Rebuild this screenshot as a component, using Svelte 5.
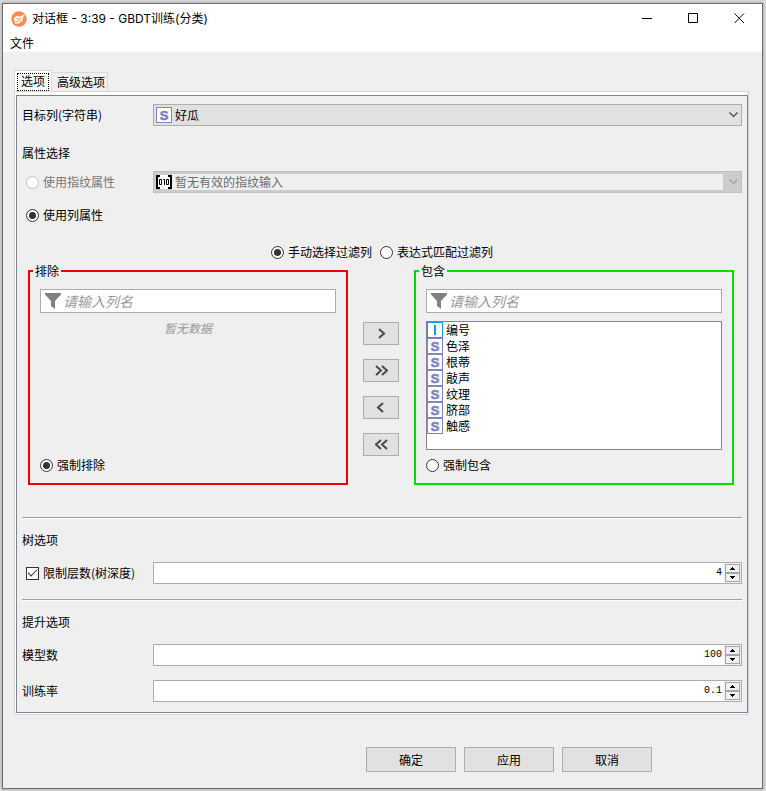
<script lang="ts">
  const columns = [
    { type: 'I', name: '编号' },
    { type: 'S', name: '色泽' },
    { type: 'S', name: '根蒂' },
    { type: 'S', name: '敲声' },
    { type: 'S', name: '纹理' },
    { type: 'S', name: '脐部' },
    { type: 'S', name: '触感' }
  ];

  const moves = [
    { label: '包含所选', path: 'M4 1 9 5.5 4 10' },
    { label: '包含全部', path: 'M1 1 6 5.5 1 10M7 1 12 5.5 7 10' },
    { label: '排除所选', path: 'M8 1 3 5.5 8 10' },
    { label: '排除全部', path: 'M6 1 1 5.5 6 10M12 1 7 5.5 12 10' }
  ];

  let source = $state('columns');
  let filterMode = $state('manual');
  let enforce = $state('exclude');
  let limitDepth = $state(true);
  let depth = $state('4');
  let models = $state('100');
  let rate = $state('0.1');

  function step(value: string, delta: number) {
    return String(Math.round((Number(value) + delta) * 10) / 10);
  }
</script>

{#snippet funnel()}
  <svg class="funnel" width="16" height="16" viewBox="0 0 16 16" aria-hidden="true">
    <path d="M0 0h16v1.5L10 8v8L6 13V8L0 1.5z" fill="#808080" />
  </svg>
{/snippet}

{#snippet badge(type: string)}
  <span class="badge" class:int={type === 'I'}>
    <svg width="16" height="16" viewBox="0 0 16 16" aria-hidden="true">
      <rect x=".5" y=".5" width="15" height="15" />
      {#if type === 'I'}
        <path d="M8 3v10" />
      {:else}
        <text x="8" y="12.5" text-anchor="middle">S</text>
      {/if}
    </svg>
  </span>
{/snippet}

{#snippet spin(up: () => void, down: () => void)}
  <span class="arrows">
    <button type="button" aria-label="增加" onclick={up}>
      <svg width="5" height="3" viewBox="0 0 5 3"><path d="M2 0h1v1h1v1h1v1H0V2h1V1h1z" /></svg>
    </button>
    <button type="button" aria-label="减少" onclick={down}>
      <svg width="5" height="3" viewBox="0 0 5 3"><path d="M0 0h5v1H4v1H3v1H2V2H1V1H0z" /></svg>
    </button>
  </span>
{/snippet}

<div class="window">
  <header class="titlebar">
    <svg width="16" height="16" viewBox="0 0 16 16" aria-hidden="true">
      <circle cx="8" cy="8" r="7.7" fill="#fb8c4b" />
      <path d="M2.5 7.2 5.5 5l3.3.6L14.5 3 12 6.3l-.6 3.5-3.6 2.7-3.6.3-.5-3z" fill="#fff" />
      <path d="m5 11 5-4.2M5.4 7.2l2 .2M8.6 10.4l.3-1.5" stroke="#fb8c4b" fill="none" />
    </svg>
    <h1>对话框 - 3:39 - GBDT训练(分类)</h1>
    <div class="controls">
      <button type="button" aria-label="最小化"><svg width="11" height="11" viewBox="0 0 11 11"><path d="M0 5.5h10" /></svg></button>
      <button type="button" aria-label="最大化"><svg width="11" height="11" viewBox="0 0 11 11"><path d="M.5.5h9v9h-9z" /></svg></button>
      <button type="button" aria-label="关闭"><svg width="11" height="11" viewBox="0 0 11 11"><path d="m.5.5 9.5 9.5M10 .5.5 10" /></svg></button>
    </div>
  </header>
  <nav class="menubar"><button type="button">文件</button></nav>

  <main>
    <div class="tabs" role="tablist">
      <button type="button" role="tab" class="tab active" aria-selected="true"><span>选项</span></button>
      <button type="button" role="tab" class="tab" aria-selected="false"><span>高级选项</span></button>
    </div>

    <div class="pane" role="tabpanel">
      <div class="panel">
        <div class="row">
          <label for="target">目标列(字符串)</label>
          <div class="combo">
            {@render badge('S')}
            <select id="target"><option>好瓜</option></select>
            <svg class="chevron" width="9" height="6" viewBox="0 0 9 6" aria-hidden="true"><path d="m.5.5 4 4 4-4" /></svg>
          </div>
        </div>

        <h2>属性选择</h2>
        <div class="row fingerprint">
          <label class="choice disabled">
            <input type="radio" value="fingerprint" bind:group={source} disabled />使用指纹属性
          </label>
          <div class="combo disabled">
            <svg width="16" height="14" viewBox="0 0 16 14" aria-hidden="true">
              <path d="M0 0h16v14H0z" fill="#fff" />
              <path d="M4 1H1v12h3M12 1h3v12h-3" fill="none" stroke="#000" stroke-width="2" />
              <path d="M3.5 4.5h2v5h-2zM7 4.5h1.5v5.5M10.5 4.5h2v5h-2z" fill="none" stroke="#000" />
            </svg>
            <select aria-label="指纹列" disabled><option>暂无有效的指纹输入</option></select>
            <svg class="chevron" width="9" height="6" viewBox="0 0 9 6" aria-hidden="true"><path d="m.5.5 4 4 4-4" /></svg>
          </div>
        </div>
        <label class="choice columns">
          <input type="radio" value="columns" bind:group={source} />使用列属性
        </label>

        <div class="modes">
          <label class="choice"><input type="radio" value="manual" bind:group={filterMode} />手动选择过滤列</label>
          <label class="choice"><input type="radio" value="pattern" bind:group={filterMode} />表达式匹配过滤列</label>
        </div>

        <div class="filter">
          <fieldset class="exclude">
            <legend>排除</legend>
            <div class="search">
              {@render funnel()}
              <input type="text" placeholder="请输入列名" aria-label="搜索排除列" />
            </div>
            <p class="empty">暂无数据</p>
            <label class="choice"><input type="radio" value="exclude" bind:group={enforce} />强制排除</label>
          </fieldset>

          <div class="moves">
            {#each moves as move}
              <button type="button" aria-label={move.label}>
                <svg width="13" height="11" viewBox="0 0 13 11"><path d={move.path} /></svg>
              </button>
            {/each}
          </div>

          <fieldset class="include">
            <legend>包含</legend>
            <div class="search">
              {@render funnel()}
              <input type="text" placeholder="请输入列名" aria-label="搜索包含列" />
            </div>
            <ul>
              {#each columns as column}
                <li>{@render badge(column.type)}{column.name}</li>
              {/each}
            </ul>
            <label class="choice"><input type="radio" value="include" bind:group={enforce} />强制包含</label>
          </fieldset>
        </div>

        <section>
          <h2>树选项</h2>
          <div class="row">
            <label class="choice"><input type="checkbox" bind:checked={limitDepth} />限制层数(树深度)</label>
            <div class="spinner">
              <input type="text" aria-label="树深度" bind:value={depth} />
              {@render spin(() => (depth = step(depth, 1)), () => (depth = step(depth, -1)))}
            </div>
          </div>
        </section>

        <section>
          <h2>提升选项</h2>
          <div class="row">
            <label for="models">模型数</label>
            <div class="spinner">
              <input id="models" type="text" bind:value={models} />
              {@render spin(() => (models = step(models, 1)), () => (models = step(models, -1)))}
            </div>
          </div>
          <div class="row rate">
            <label for="rate">训练率</label>
            <div class="spinner">
              <input id="rate" type="text" bind:value={rate} />
              {@render spin(() => (rate = step(rate, 0.1)), () => (rate = step(rate, -0.1)))}
            </div>
          </div>
        </section>
      </div>
    </div>

    <footer>
      <button type="button">确定</button>
      <button type="button">应用</button>
      <button type="button">取消</button>
    </footer>
  </main>
</div>

<style>
  :global(body) {
    background: #dadada;
  }
  .window {
    margin: 3px 3px 2px 2px;
    border: 1px solid #6c6c6c;
    background: #efefef;
    color: #000;
    font: 12px/16px "Noto Sans CJK SC", sans-serif;
    box-shadow: 0 0 3px rgba(0, 0, 0, 0.3);
  }
  .window * {
    box-sizing: border-box;
  }
  button,
  input,
  select {
    margin: 0;
    padding: 0;
    border: 0;
    border-radius: 0;
    background: none;
    color: inherit;
    font: inherit;
  }
  svg {
    display: block;
    flex: none;
  }
  h1,
  h2,
  p,
  ul {
    margin: 0;
    padding: 0;
    font-size: 12px;
    font-weight: 400;
  }
  h2 {
    height: 16px;
  }

  .titlebar {
    display: flex;
    align-items: center;
    height: 29px;
    padding-left: 8px;
    background: #fff;
  }
  h1 {
    flex: 1;
    margin-left: 5px;
    font-family: Inter, "Noto Sans CJK SC", sans-serif;
    white-space: nowrap;
  }
  .controls {
    display: flex;
  }
  .controls button {
    display: flex;
    align-items: center;
    justify-content: center;
    width: 46px;
    height: 28px;
  }
  .controls path {
    fill: none;
    stroke: #000;
  }
  .menubar {
    height: 19px;
    padding-left: 7px;
    background: #fff;
  }
  .menubar button {
    display: block;
    line-height: 20px;
  }

  main {
    padding: 18px 13px 16px 11px;
  }
  .tabs {
    display: flex;
    align-items: flex-end;
  }
  .tab {
    height: 19px;
    padding: 0 2px 0 5px;
    border: 1px solid #d9d9d9;
    border-width: 1px 1px 0 0;
    line-height: 18px;
  }
  .tab.active {
    height: 21px;
    padding: 2px 2px 0;
    border-left-width: 1px;
    background: #fff;
  }
  .tab.active span {
    display: block;
    height: 18px;
    padding: 0 3px;
    border: 1px dotted #000;
    line-height: 14px;
  }
  .pane {
    padding: 3px 0 1px 1px;
    border: 1px solid #d5d5d9;
    background: #fff;
  }
  .panel {
    padding: 8px 5px 10px;
    border: 1px solid #7f838f;
    background: #efefef;
  }

  .row {
    display: grid;
    grid-template-columns: 131px 1fr;
    align-items: center;
  }
  .panel > h2 {
    margin-top: 19px;
  }
  .fingerprint {
    margin-top: 10px;
  }
  .choice {
    display: flex;
    align-items: center;
    gap: 4px;
    height: 16px;
    white-space: nowrap;
  }
  .row .choice,
  .columns {
    margin-left: 4px;
  }
  .columns {
    margin-top: 14px;
  }
  .choice.disabled {
    color: #767676;
  }
  .choice input {
    display: grid;
    place-items: center;
    flex: none;
    width: 13px;
    height: 13px;
    appearance: none;
    border: 1px solid #333;
    background: #fff;
  }
  .choice input[type='radio'] {
    border-radius: 50%;
  }
  .choice input[type='radio']:checked::before {
    content: '';
    width: 7px;
    height: 7px;
    border-radius: 50%;
    background: #333;
  }
  .choice input[type='checkbox']:checked::before {
    content: '';
    width: 8px;
    height: 4px;
    margin-bottom: 3px;
    border: solid #333;
    border-width: 0 0 1px 1px;
    transform: rotate(-45deg);
  }
  .choice input:disabled {
    border-color: #c3c3c3;
  }

  .combo {
    display: flex;
    align-items: center;
    height: 22px;
    padding: 0 3px 0 2px;
    border: 1px solid #adadad;
    background: #e1e1e1;
  }
  .combo select {
    flex: 1;
    height: 18px;
    padding-left: 3px;
    appearance: none;
    opacity: 1;
  }
  .combo.disabled {
    border-color: #bfbfbf;
    background: #ccc;
    color: #6d6d6d;
  }
  .combo.disabled select {
    height: 16px;
    margin-right: 6px;
    background: #efefef;
  }
  .chevron path {
    fill: none;
    stroke: #444;
    stroke-width: 1.2;
  }
  .disabled .chevron path {
    stroke: #a0a0a0;
  }

  .badge rect {
    fill: #fff;
    stroke: #8383c4;
  }
  .badge text {
    fill: #8080c0;
    stroke: #8080c0;
    stroke-width: 0.6;
    font: bold 13px "Liberation Sans", sans-serif;
  }
  .badge.int rect,
  .badge.int path {
    stroke: #0b9fe0;
  }
  .badge.int path {
    stroke-width: 2;
  }

  .modes {
    display: flex;
    justify-content: center;
    gap: 8px;
    margin-top: 21px;
  }
  .filter {
    display: flex;
    gap: 15px;
    margin: 3px 8px 32px 6px;
  }
  fieldset {
    display: flex;
    flex: 1;
    flex-direction: column;
    min-width: 0;
    height: 222px;
    margin: 0;
    padding: 10px;
    border: 2px solid #f00000;
  }
  .include {
    border-color: #00e000;
  }
  legend {
    height: 16px;
    margin-left: -7px;
    padding: 0 2px;
  }
  .search {
    display: flex;
    flex: none;
    align-items: center;
    height: 24px;
    padding: 0 4px;
    border: 1px solid #abadb3;
    background: #fff;
  }
  .search input {
    flex: 1;
    min-width: 0;
    height: 20px;
    padding-left: 2px;
    outline: none;
    font-size: 14px;
    font-style: italic;
  }
  .search input::placeholder {
    color: #999;
  }
  .empty {
    flex: 1;
    padding-top: 7px;
    color: #999;
    font-style: italic;
    text-align: center;
  }
  ul {
    flex: none;
    height: 129px;
    margin: 8px 0 7px;
    border: 1px solid #828790;
    background: #fff;
    list-style: none;
  }
  li {
    display: flex;
    gap: 3px;
    height: 16px;
  }
  .moves {
    display: flex;
    flex-direction: column;
    gap: 14px;
    padding-top: 59px;
  }
  .moves button {
    display: flex;
    align-items: center;
    justify-content: center;
    width: 36px;
    height: 23px;
    border: 1px solid #adadad;
    background: #e1e1e1;
  }
  .moves path {
    fill: none;
    stroke: #4a4a4a;
    stroke-width: 2;
  }

  section {
    padding-top: 14px;
    border-top: 1px solid #a0a0a0;
    box-shadow: inset 0 1px #fff;
  }
  section h2 {
    margin-bottom: 14px;
  }
  section + section {
    margin-top: 15px;
  }
  .rate {
    margin-top: 14px;
  }
  .spinner {
    display: flex;
    height: 22px;
    padding-right: 1px;
    border: 1px solid #abadb3;
    background: linear-gradient(#fff, #fff) left / calc(100% - 17px) 100% no-repeat #efefef;
  }
  .spinner input {
    flex: 1;
    min-width: 0;
    padding-right: 3px;
    outline: none;
    font-family: "Liberation Mono", monospace;
    font-size: 10px;
    text-align: right;
  }
  .arrows {
    display: flex;
    flex-direction: column;
    padding-top: 1px;
  }
  .arrows button {
    display: flex;
    align-items: center;
    justify-content: center;
    width: 15px;
    height: 9px;
    border: 1px solid #a6a6a6;
    background: #efefef;
  }

  footer {
    display: flex;
    justify-content: flex-end;
    gap: 8px;
    padding: 32px 97px 0 0;
  }
  footer button {
    width: 90px;
    height: 25px;
    border: 1px solid #adadad;
    background: #e1e1e1;
  }
</style>
